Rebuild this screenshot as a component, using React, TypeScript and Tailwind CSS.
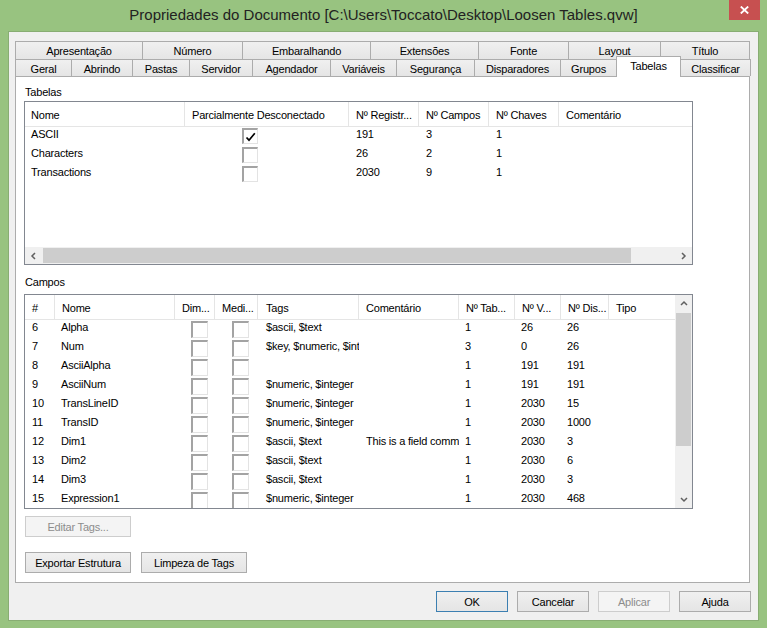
import React from "react";

const font = "font-['Liberation_Sans',Arial,sans-serif]";

function CheckBox({ checked, big }: { checked?: boolean; big?: boolean }) {
  return (
    <div
      className={`${big ? "w-[17px] h-[17px]" : "w-[16px] h-[16px]"} bg-white border-t-2 border-l-2 border-r border-b border-t-[#a3a3a3] border-l-[#a3a3a3] border-r-[#e3e3e3] border-b-[#e3e3e3] flex items-center justify-start`}
    >
      {checked && (
        <svg width="12" height="12" viewBox="0 0 12 12" className="ml-[1px]">
          <path d="M1.5 6.5 L4 9.2 L9.8 2.2" fill="none" stroke="#000" strokeWidth="1.7" />
        </svg>
      )}
    </div>
  );
}

function Chevron({ dir }: { dir: "up" | "down" | "left" | "right" }) {
  const d =
    dir === "up"
      ? "M1 5 L4 2 L7 5"
      : dir === "down"
      ? "M1 2 L4 5 L7 2"
      : dir === "left"
      ? "M5 1 L2 4 L5 7"
      : "M2 1 L5 4 L2 7";
  return (
    <svg width="8" height="8" viewBox="0 0 8 8">
      <path d={d} fill="none" stroke="#606060" strokeWidth="1.5" />
    </svg>
  );
}

const tabs1: [string, string][] = [
  ["Apresentação", "w-[127px]"],
  ["Número", "w-[100px]"],
  ["Embaralhando", "w-[128px]"],
  ["Extensões", "w-[108px]"],
  ["Fonte", "w-[90px]"],
  ["Layout", "w-[92px]"],
  ["Título", "w-[90px]"],
];

const tabs2: [string, string][] = [
  ["Geral", "w-[56px]"],
  ["Abrindo", "w-[61px]"],
  ["Pastas", "w-[57px]"],
  ["Servidor", "w-[63px]"],
  ["Agendador", "w-[78px]"],
  ["Variáveis", "w-[66px]"],
  ["Segurança", "w-[78px]"],
  ["Disparadores", "w-[86px]"],
  ["Grupos", "w-[56px]"],
  ["Tabelas", "w-[65px]"],
  ["Classificar", "w-[70px]"],
];

const t1cols: [string, string, string][] = [
  ["Nome", "w-[160px]", "pl-[6px]"],
  ["Parcialmente Desconectado", "w-[164px]", "pl-[7px]"],
  ["Nº Registr...", "w-[70px]", "pl-[7px]"],
  ["Nº Campos", "w-[70px]", "pl-[7px]"],
  ["Nº Chaves", "w-[70px]", "pl-[7px]"],
  ["Comentário", "flex-1", "pl-[7px]"],
];

const t1rows: [string, boolean, string, string, string][] = [
  ["ASCII", true, "191", "3", "1"],
  ["Characters", false, "26", "2", "1"],
  ["Transactions", false, "2030", "9", "1"],
];

const t2cols: [string, string, string][] = [
  ["#", "w-[30px]", "pl-[7px]"],
  ["Nome", "w-[120px]", "pl-[7px]"],
  ["Dim...", "w-[40px]", "pl-[7px]"],
  ["Medi...", "w-[43px]", "pl-[7px]"],
  ["Tags", "w-[101px]", "pl-[8px]"],
  ["Comentário", "w-[100px]", "pl-[7px]"],
  ["Nº Tab...", "w-[56px]", "pl-[7px]"],
  ["Nº V...", "w-[46px]", "pl-[7px]"],
  ["Nº Dis...", "w-[48px]", "pl-[7px]"],
  ["Tipo", "w-[66px]", "pl-[7px]"],
];

const t2rows: [string, string, string, string, string, string, string][] = [
  ["6", "Alpha", "$ascii, $text", "", "1", "26", "26"],
  ["7", "Num", "$key, $numeric, $integer", "", "3", "0", "26"],
  ["8", "AsciiAlpha", "", "", "1", "191", "191"],
  ["9", "AsciiNum", "$numeric, $integer", "", "1", "191", "191"],
  ["10", "TransLineID", "$numeric, $integer", "", "1", "2030", "15"],
  ["11", "TransID", "$numeric, $integer", "", "1", "2030", "1000"],
  ["12", "Dim1", "$ascii, $text", "This is a field comment", "1", "2030", "3"],
  ["13", "Dim2", "$ascii, $text", "", "1", "2030", "6"],
  ["14", "Dim3", "$ascii, $text", "", "1", "2030", "3"],
  ["15", "Expression1", "$numeric, $integer", "", "1", "2030", "468"],
];

function Btn({
  label,
  w,
  disabled,
  primary,
}: {
  label: string;
  w: string;
  disabled?: boolean;
  primary?: boolean;
}) {
  const cls = disabled
    ? "border-[#cdcdcd] bg-[#f4f4f4] text-[#8c8c8c]"
    : primary
    ? "border-[#3c7fb1] bg-gradient-to-b from-[#f0f0f0] to-[#e5e5e5] text-black"
    : "border-[#acacac] bg-gradient-to-b from-[#f0f0f0] to-[#e5e5e5] text-black";
  return (
    <div className={`${w} h-[21px] border ${cls} flex items-center justify-center pt-[2px]`}>
      {label}
    </div>
  );
}

export default function App() {
  return (
    <div
      className={`${font} w-[767px] h-[628px] bg-[#98c380] flex flex-col text-[11px] leading-[13px] tracking-[-0.2px] text-black select-none`}
    >
      {/* Title bar */}
      <div className="h-[31px] grid grid-cols-[38px_1fr_38px] shrink-0">
        <div />
        <div className="flex items-center justify-center text-[15px] leading-[18px] tracking-normal text-[#222] pb-[1px]">
          Propriedades do Documento [C:\Users\Toccato\Desktop\Loosen Tables.qvw]
        </div>
        <div className="flex items-start">
          <div className="w-[31px] h-[20px] bg-[#c75050] flex items-center justify-center">
            <svg width="9" height="8" viewBox="0 0 9 8">
              <path d="M0.8 0.5 L8.2 7.5 M8.2 0.5 L0.8 7.5" stroke="#fff" strokeWidth="1.8" />
            </svg>
          </div>
        </div>
      </div>

      {/* Client */}
      <div className="mx-[8px] mb-[7px] flex-1 bg-[#f0f0f0] border border-[#88ad73] flex flex-col pt-[9px] pl-[6px]">
        {/* Tab row 1 */}
        <div className="flex h-[18px]">
          {tabs1.map(([label, w], i) => (
            <div
              key={label}
              className={`${w} h-full border-t border-l border-[#acacac] ${
                i === tabs1.length - 1 ? "border-r" : ""
              } bg-gradient-to-b from-[#f0f0f0] to-[#e5e5e5] flex items-center justify-center pt-[2px]`}
            >
              {label}
            </div>
          ))}
        </div>
        {/* Tab row 2 */}
        <div className="flex h-[17px] items-start">
          {tabs2.map(([label, w], i) => {
            const sel = label === "Tabelas";
            const afterSel = i > 0 && tabs2[i - 1][0] === "Tabelas";
            if (sel) {
              return (
                <div
                  key={label}
                  className={`${w} h-[21px] -mt-[3px] relative z-10 bg-white border-t border-l border-r border-[#acacac] flex items-center justify-center pb-[1px]`}
                >
                  {label}
                </div>
              );
            }
            return (
              <div
                key={label}
                className={`${w} h-full border-t ${afterSel ? "" : "border-l"} border-[#acacac] ${
                  i === tabs2.length - 1 ? "border-r" : ""
                } bg-gradient-to-b from-[#f0f0f0] to-[#e5e5e5] flex items-center justify-center pt-[2px]`}
              >
                {label}
              </div>
            );
          })}
        </div>

        {/* Panel */}
        <div className="w-[735px] h-[507px] shrink-0 bg-white border border-[#acacac] pl-[8px] pt-[9px] flex flex-col">
          <div className="ml-[1px] h-[13px]">Tabelas</div>
          {/* Table 1 */}
          <div className="mt-[2px] w-[669px] h-[164px] border border-[#828790] flex flex-col">
            <div className="h-[25px] border-b border-[#e5e5e5] flex shrink-0">
              {t1cols.map(([label, w, p], i) => (
                <div
                  key={label}
                  className={`${w} ${p} h-full flex items-center pt-[2px] whitespace-nowrap overflow-hidden ${
                    i < t1cols.length - 1 ? "border-r border-[#e5e5e5]" : ""
                  }`}
                >
                  {label}
                </div>
              ))}
            </div>
            <div className="flex-1 flex flex-col">
              {t1rows.map(([name, chk, reg, camp, chav]) => (
                <div key={name} className="h-[19px] flex items-start shrink-0">
                  <div className="w-[160px] pl-[6px] pt-[1px]">{name}</div>
                  <div className="w-[164px] pl-[57px] pt-[1px]">
                    <CheckBox checked={chk} />
                  </div>
                  <div className="w-[70px] pl-[7px] pt-[1px]">{reg}</div>
                  <div className="w-[70px] pl-[7px] pt-[1px]">{camp}</div>
                  <div className="w-[70px] pl-[7px] pt-[1px]">{chav}</div>
                  <div className="flex-1" />
                </div>
              ))}
            </div>
            <div className="h-[17px] bg-[#f0f0f0] flex items-center shrink-0">
              <div className="w-[17px] h-full flex items-center justify-center">
                <Chevron dir="left" />
              </div>
              <div className="ml-[1px] w-[588px] h-[15px] bg-[#cdcdcd]" />
              <div className="flex-1" />
              <div className="w-[17px] h-full flex items-center justify-center">
                <Chevron dir="right" />
              </div>
            </div>
          </div>

          <div className="ml-[1px] mt-[11px] h-[13px]">Campos</div>
          {/* Table 2 */}
          <div className="mt-[5px] w-[669px] h-[215px] border border-[#828790] flex">
            <div className="w-[650px] flex flex-col">
              <div className="h-[25px] border-b border-[#e5e5e5] flex shrink-0">
                {t2cols.map(([label, w, p], i) => (
                  <div
                    key={label}
                    className={`${w} ${p} h-full flex items-center pt-[2px] whitespace-nowrap overflow-hidden ${
                      i < t2cols.length - 1 ? "border-r border-[#e5e5e5]" : ""
                    }`}
                  >
                    {label}
                  </div>
                ))}
              </div>
              <div className="flex-1 overflow-hidden">
                {t2rows.map(([n, name, tags, com, tab, v, dis]) => (
                  <div key={n} className="h-[19px] flex items-start">
                    <div className="w-[30px] pl-[7px] pt-[1px]">{n}</div>
                    <div className="w-[120px] pl-[6px] pt-[1px]">{name}</div>
                    <div className="w-[40px] pl-[16px] pt-[1px]">
                      <CheckBox big />
                    </div>
                    <div className="w-[43px] pl-[17px] pt-[1px]">
                      <CheckBox big />
                    </div>
                    <div className="w-[101px] pl-[8px] pr-[4px] pt-[1px] whitespace-nowrap overflow-hidden">{tags}</div>
                    <div className="w-[100px] pl-[7px] pr-[4px] pt-[1px] whitespace-nowrap overflow-hidden">{com}</div>
                    <div className="w-[56px] pl-[6px] pt-[1px]">{tab}</div>
                    <div className="w-[46px] pl-[6px] pt-[1px]">{v}</div>
                    <div className="w-[48px] pl-[6px] pt-[1px]">{dis}</div>
                    <div className="w-[66px]" />
                  </div>
                ))}
              </div>
            </div>
            <div className="w-[17px] bg-[#f0f0f0] flex flex-col">
              <div className="h-[17px] flex items-center justify-center">
                <Chevron dir="up" />
              </div>
              <div className="mt-[1px] mx-[1px] h-[133px] bg-[#cdcdcd]" />
              <div className="flex-1" />
              <div className="h-[17px] flex items-center justify-center">
                <Chevron dir="down" />
              </div>
            </div>
          </div>

          <div className="ml-[1px] mt-[7px]">
            <Btn label="Editar Tags..." w="w-[106px]" disabled />
          </div>
          <div className="ml-[1px] mt-[15px] flex gap-[10px]">
            <Btn label="Exportar Estrutura" w="w-[106px]" />
            <Btn label="Limpeza de Tags" w="w-[106px]" />
          </div>
        </div>

        {/* Bottom buttons */}
        <div className="mt-[8px] pr-[7px] flex justify-end gap-[9px]">
          <Btn label="OK" w="w-[72px]" primary />
          <Btn label="Cancelar" w="w-[72px]" />
          <Btn label="Aplicar" w="w-[72px]" disabled />
          <Btn label="Ajuda" w="w-[72px]" />
        </div>
      </div>
    </div>
  );
}
